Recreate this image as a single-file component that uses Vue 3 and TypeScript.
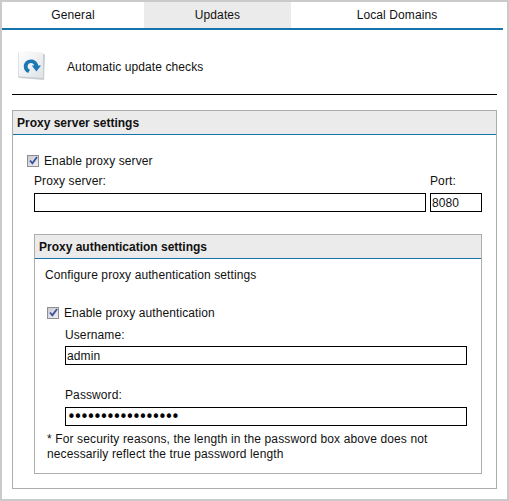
<script setup lang="ts">
import { ref } from "vue";

const tabs = [
  { label: "General", width: 142 },
  { label: "Updates", width: 147, active: true },
  { label: "Local Domains", width: 212 },
];

const proxyPort = ref("8080");
const username = ref("admin");
const password = ref("abcdefghijklmnopq");
</script>

<template>
  <div class="window">
    <nav class="tabs">
      <div
        v-for="tab in tabs"
        :key="tab.label"
        class="tab"
        :class="{ active: tab.active }"
        :style="{ width: tab.width + 'px' }"
      >
        {{ tab.label }}
      </div>
    </nav>

    <div class="content">
      <div class="intro">
        <svg class="intro-icon" width="30" height="34" viewBox="0 0 30 34" aria-hidden="true">
          <defs>
            <linearGradient id="page" x1="0" y1="0" x2="1" y2="1">
              <stop offset="0" stop-color="#ffffff" />
              <stop offset="1" stop-color="#dfe3e6" />
            </linearGradient>
          </defs>
          <path d="M2 3 L27 5 Q28 5 28 6 L27 31 L3 29 Q1 29 1 27 L1 4 Q1 3 2 3Z" fill="#c9cccf" />
          <path d="M2 1.5 L26 3.5 L26 29 L3 27.5 Q1.5 27.5 1.5 26 L1.5 2Z" fill="url(#page)" />
          <path
            d="M14 10.5 C9.8 10.5 6.8 13.6 6.8 17.5 C6.8 20.5 8.6 23 11.2 24 L13 20.6 C11.4 20 10.6 18.9 10.6 17.4 C10.6 15.4 12.1 14 14 14 C15.6 14 16.9 15 17.2 16.6 L14.8 16.6 L19.4 22.6 L24 16.6 L21.2 16.6 C20.8 13.1 17.8 10.5 14 10.5Z"
            fill="#1a78b4"
          />
        </svg>
        <span>Automatic update checks</span>
      </div>

      <section class="panel outer">
        <h2 class="panel-title">Proxy server settings</h2>

        <label class="check outer-check">
          <span class="box">
            <svg width="9" height="9" viewBox="0 0 9 9" aria-hidden="true">
              <path d="M1 4.5 L3.4 7.4 L8 1" fill="none" stroke="#3c4f9e" stroke-width="1.8" />
            </svg>
          </span>
          Enable proxy server
        </label>

        <div class="server-row">
          <div class="field grow">
            <label>Proxy server:</label>
            <input type="text" />
          </div>
          <div class="field port">
            <label>Port:</label>
            <input v-model="proxyPort" type="text" />
          </div>
        </div>

        <section class="panel inner">
          <h2 class="panel-title">Proxy authentication settings</h2>
          <p class="configure">Configure proxy authentication settings</p>

          <label class="check inner-check">
            <span class="box">
              <svg width="9" height="9" viewBox="0 0 9 9" aria-hidden="true">
                <path d="M1 4.5 L3.4 7.4 L8 1" fill="none" stroke="#3c4f9e" stroke-width="1.8" />
              </svg>
            </span>
            Enable proxy authentication
          </label>

          <div class="creds">
            <label>Username:</label>
            <input v-model="username" type="text" />
            <label class="password-label">Password:</label>
            <input v-model="password" class="secret" type="password" />
          </div>

          <p class="note">
            * For security reasons, the length in the password box above does not<br />
            necessarily reflect the true password length
          </p>
        </section>
      </section>
    </div>
  </div>
</template>

<style>
html,
body {
  margin: 0;
  background: #fff;
}
</style>

<style scoped>
.window {
  box-sizing: border-box;
  width: 509px;
  height: 501px;
  padding-right: 4px;
  border: 2px solid #cacaca;
  font-family: "Liberation Sans", Arial, sans-serif;
  font-size: 12px;
  letter-spacing: 0.1px;
  color: #111;
  background: #fff;
}

.tabs {
  display: flex;
  height: 26px;
  border-bottom: 2px solid #1673ab;
}

.tab {
  display: flex;
  align-items: center;
  justify-content: center;
  padding-bottom: 1px;
}

.tab.active {
  background: #ebebeb;
}

.content {
  padding: 0 6px 0 10px;
}

.intro {
  box-sizing: border-box;
  display: flex;
  align-items: center;
  height: 65px;
  padding: 10px 0 0 5px;
  border-bottom: 1px solid #000;
}

.intro-icon {
  margin: 0 20px 2px 0;
  flex: none;
}

.panel {
  box-sizing: border-box;
  border: 1px solid #adadad;
}

.panel-title {
  display: flex;
  align-items: center;
  box-sizing: border-box;
  height: 24px;
  margin: 0;
  padding-left: 4px;
  border-bottom: 1px solid #1673ab;
  background: #ebebeb;
  font-size: 12px;
  font-weight: 700;
  letter-spacing: 0;
  color: #111;
}

.outer {
  height: 379px;
  margin-top: 15px;
}

.check {
  display: flex;
  align-items: center;
  gap: 5px;
  height: 13px;
}

.outer-check {
  margin: 19px 0 0 14px;
}

.box {
  box-sizing: border-box;
  display: flex;
  align-items: center;
  justify-content: center;
  width: 12px;
  height: 12px;
  border: 1px solid #8e8f8f;
  background: linear-gradient(135deg, #c9cbd2, #f0f0f3);
}

.server-row {
  display: flex;
  gap: 4px;
  margin: 7px 14px 0 21px;
}

.field {
  display: flex;
  flex-direction: column;
}

.field label {
  height: 14px;
  line-height: 14px;
  margin-bottom: 5px;
}

.grow {
  flex: 1;
}

.port {
  width: 52px;
}

input {
  box-sizing: border-box;
  width: 100%;
  height: 19px;
  margin: 0;
  padding: 0 1px;
  border: 1px solid #000;
  border-radius: 0;
  outline: none;
  font: inherit;
  letter-spacing: inherit;
  color: #111;
  background: #fff;
}

.secret {
  font-family: "DejaVu Sans", sans-serif;
  font-size: 15px;
  letter-spacing: -2.35px;
  color: #000;
}

.inner {
  height: 240px;
  margin: 22px 14px 0 21px;
}

.configure {
  margin: 9px 0 0 10px;
  line-height: 14px;
}

.inner-check {
  margin: 24px 0 0 12px;
}

.creds {
  display: flex;
  flex-direction: column;
  margin: 9px 14px 0 30px;
}

.creds label {
  height: 14px;
  line-height: 14px;
  margin-bottom: 4px;
}

.creds .password-label {
  margin-top: 23px;
  margin-bottom: 5px;
}

.note {
  margin: 6px 0 0 12px;
  line-height: 15px;
  letter-spacing: 0.13px;
}
</style>
